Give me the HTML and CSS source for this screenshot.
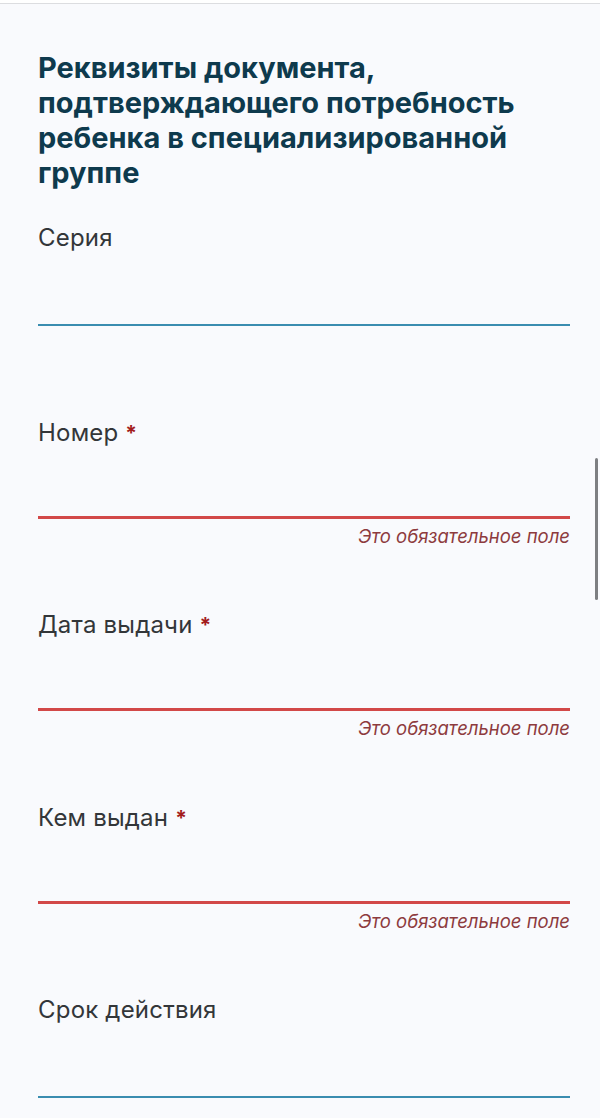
FILE: index.html
```html
<!DOCTYPE html>
<html lang="ru">
<head>
<meta charset="utf-8">
<title>Реквизиты документа</title>
<link rel="stylesheet" href="styles.css">
</head>
<body>
<div class="topbar"></div>
<main class="page">
  <h1 class="title">Реквизиты документа, подтверждающего потребность ребенка в специализированной группе</h1>
  <form class="form">
    <div class="field">
      <label class="label">Серия</label>
      <div class="input"></div>
      <div class="hint"></div>
    </div>
    <div class="field">
      <label class="label">Номер <span class="req">*</span></label>
      <div class="input input-error"></div>
      <div class="hint">Это обязательное поле</div>
    </div>
    <div class="field">
      <label class="label">Дата выдачи <span class="req">*</span></label>
      <div class="input input-error"></div>
      <div class="hint">Это обязательное поле</div>
    </div>
    <div class="field">
      <label class="label">Кем выдан <span class="req">*</span></label>
      <div class="input input-error"></div>
      <div class="hint">Это обязательное поле</div>
    </div>
    <div class="field">
      <label class="label">Срок действия</label>
      <div class="input"></div>
      <div class="hint"></div>
    </div>
  </form>
</main>
<div class="scrollbar"></div>
</body>
</html>
```
FILE: styles.css
```css
html, body {
  margin: 0;
  padding: 0;
}
body {
  background: #f9fafd;
  font-family: Inter, "Noto Sans", "DejaVu Sans", sans-serif;
  color: #333639;
  overflow: hidden;
}
.topbar {
  height: 3px;
  background: #ffffff;
  border-bottom: 1px solid #dcdde0;
}
.page {
  padding: 46px 30px 0 38px;
}
.title {
  margin: 0;
  font-size: 29px;
  line-height: 35px;
  font-weight: 700;
  color: #0e3a4d;
  letter-spacing: 0;
}
.form {
  margin-top: 34px;
  display: flex;
  flex-direction: column;
}
.field {
  display: flex;
  flex-direction: column;
  margin-bottom: 63.5px;
}
.label {
  display: block;
  height: 28px;
  font-size: 24px;
  line-height: 28px;
  letter-spacing: 0.2px;
  color: #333639;
}
.req {
  color: #a31c1c;
  font-weight: 700;
  font-size: 21px;
  line-height: 0;
}
.input {
  height: 72px;
  border-bottom: 2px solid #3a8db0;
}
.input-error {
  height: 69px;
  border-bottom: 3px solid #d24848;
}
.hint {
  margin-top: 5px;
  height: 24px;
  line-height: 24px;
  font-size: 18.5px;
  font-style: italic;
  color: #8d3b3e;
  text-align: right;
}
.scrollbar {
  position: fixed;
  right: 2px;
  top: 458px;
  width: 3px;
  height: 142px;
  border-radius: 2px;
  background: #7d7f82;
}
```
